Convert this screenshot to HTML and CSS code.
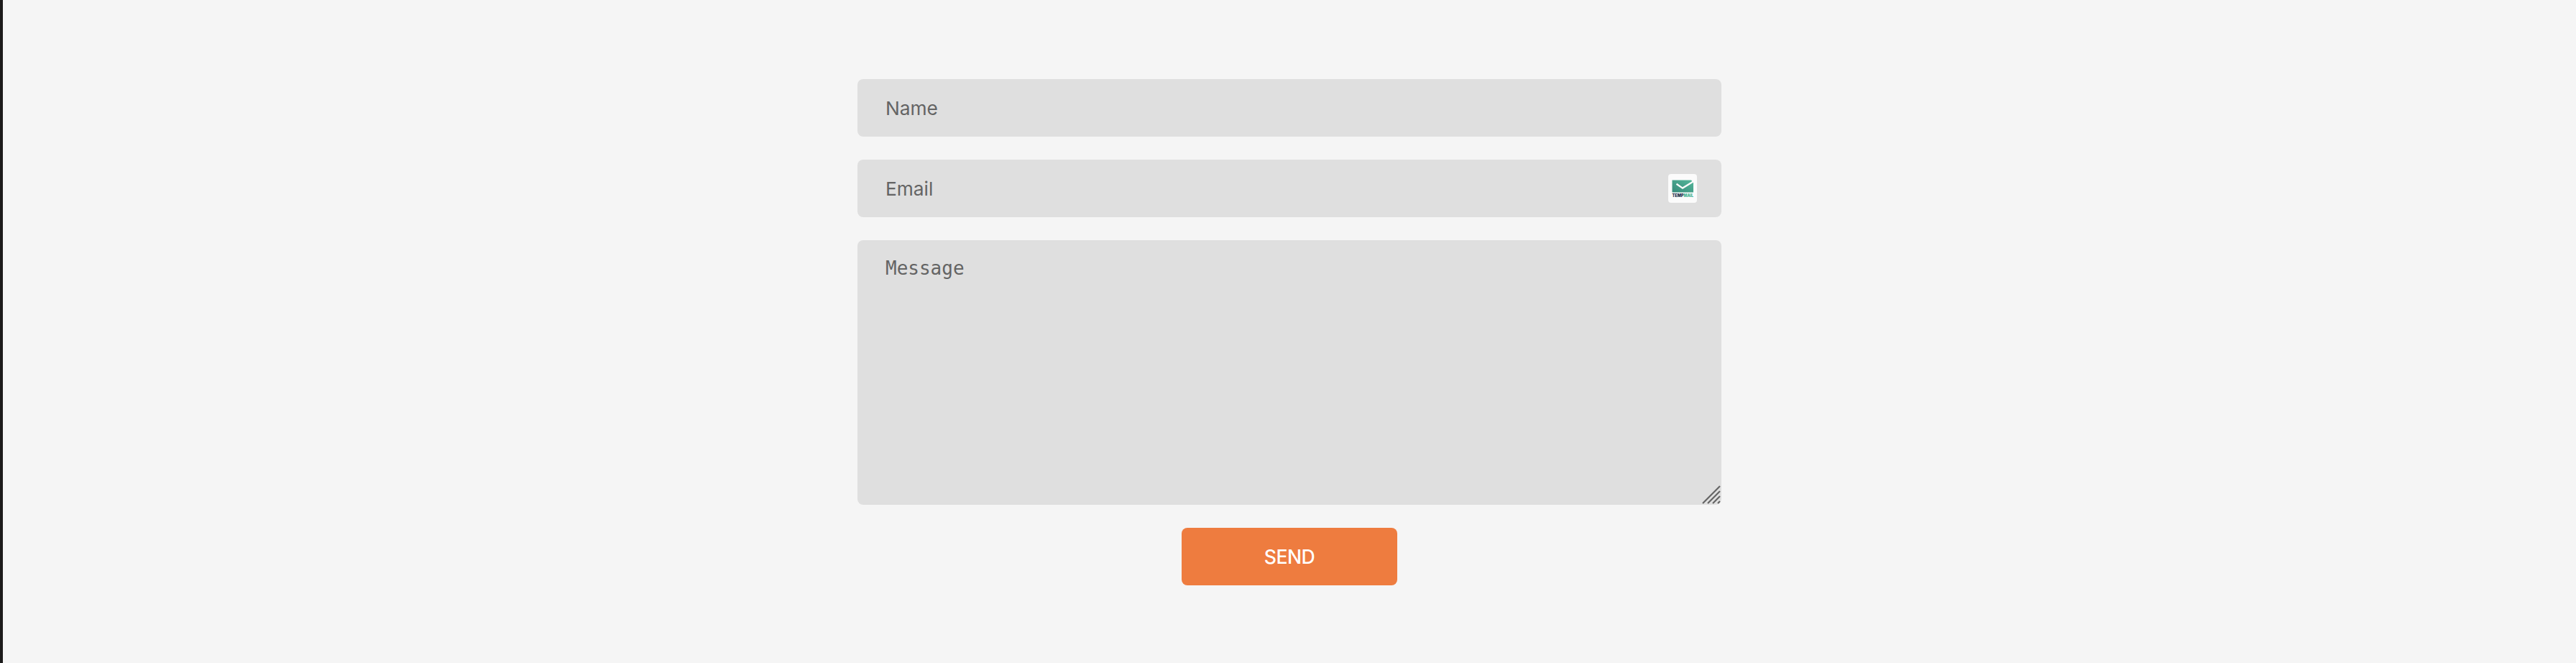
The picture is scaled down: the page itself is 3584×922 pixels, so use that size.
FILE: index.html
```html
<!DOCTYPE html>
<html lang="en">
<head>
<meta charset="utf-8">
<title>Contact</title>
<link rel="stylesheet" href="styles.css">
</head>
<body>
<form class="contact">
  <input class="field" type="text" placeholder="Name" aria-label="Name">
  <div class="email">
    <input class="field" type="email" placeholder="Email" aria-label="Email">
    <svg class="mail-badge" viewBox="0 0 40 40" aria-hidden="true">
      <defs><linearGradient id="mail" x1="0" y1="1" x2="1" y2="0"><stop offset="0" stop-color="#368a79"/><stop offset="1" stop-color="#55b79b"/></linearGradient></defs>
      <rect width="40" height="40" rx="4" fill="#fbfbfb"/>
      <path d="M5.5 8.5H32L35 12V25.5H5.5Z" fill="url(#mail)"/>
      <path d="M11.5 13.7L20 19.6L35.5 10" fill="none" stroke="#fbfbfb" stroke-width="2.3"/>
      <text class="temp" x="5.5" y="32" textLength="16" lengthAdjust="spacingAndGlyphs">TEMP</text>
      <text class="mail" x="21.5" y="32" textLength="13.5" lengthAdjust="spacingAndGlyphs">MAIL</text>
    </svg>
  </div>
  <div class="message">
    <textarea class="field area" placeholder="Message" aria-label="Message"></textarea>
    <svg class="grip" viewBox="0 0 26 26" aria-hidden="true"><path d="M1 25L25 1M8 25L25 8M15 25L25 15M22 25L25 22"/></svg>
  </div>
  <button class="send" type="button">SEND</button>
</form>
</body>
</html>
```
FILE: styles.css
```css
* { box-sizing: border-box; }
body {
  margin: 0;
  min-height: 922px;
  padding-top: 110px;
  background: #f5f5f5;
  border-left: 4px solid #1c1b1b;
  font-family: Inter, "Liberation Sans", sans-serif;
}
.contact {
  display: flex;
  flex-direction: column;
  align-items: center;
  gap: 32px;
  width: 1202px;
  margin: 0 auto;
}
.field {
  display: block;
  width: 100%;
  height: 80px;
  margin: 0;
  padding: 0 39px;
  border: 0;
  border-radius: 8px;
  background: #dfdfdf;
  font: 26.3px Inter, "Liberation Sans", sans-serif;
  letter-spacing: 0;
  outline: 0;
}
.field::placeholder { color: #646464; opacity: 1; }
.email, .message { position: relative; width: 100%; }
.area {
  height: 368px;
  padding: 24px 39px;
  font: 26px/31px "DejaVu Sans Mono", monospace;
  letter-spacing: 0;
  resize: none;
}
.mail-badge {
  position: absolute;
  top: 20px;
  right: 34px;
  width: 40px;
  height: 40px;
}
.mail-badge text {
  font: 900 5.8px Inter, "Liberation Sans", sans-serif;
}
.temp { fill: #24334d; }
.mail { fill: #4bb596; }
.grip {
  position: absolute;
  right: 1.5px;
  bottom: 1.5px;
  width: 26px;
  height: 26px;
  fill: none;
  stroke: #656565;
  stroke-width: 2.2;
}
.send {
  width: 300px;
  height: 80px;
  padding: 0;
  border: 0;
  border-radius: 8px;
  background: #ee7c3f;
  color: #fff;
  font: 500 26.67px Inter, "Liberation Sans", sans-serif;
  letter-spacing: -0.6px;
}
```
